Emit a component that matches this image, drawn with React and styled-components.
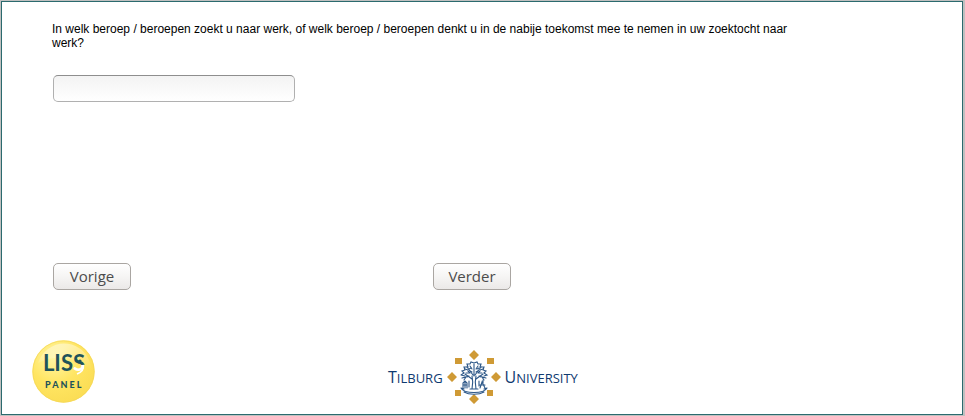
import React from "react";
import styled, { createGlobalStyle } from "styled-components";

const GlobalStyle = createGlobalStyle`
  * { box-sizing: border-box; }
  body {
    margin: 0;
    background: #c0c0c0;
    font-family: "Liberation Sans", Arial, sans-serif;
  }
`;

const Frame = styled.div`
  margin: 1px 2px 1px 1px;
  border: 1px solid #2b6a6e;
  background: #fff;
`;

const Form = styled.form`
  padding: 20px 50px 0;
`;

const Question = styled.label`
  display: block;
  max-width: 750px;
  font-size: 12px;
  line-height: 14px;
  color: #000;
`;

const AnswerInput = styled.input`
  display: block;
  width: 242px;
  height: 27px;
  margin: 25px 1px 0;
  padding: 4px 8px;
  border: 1px solid #b0b0b0;
  border-top-color: #8e8e8e;
  border-radius: 5px;
  background: linear-gradient(#f3f3f3, #fff);
  font: 15px "Open Sans", sans-serif;
  color: #3c3c3c;
`;

const Actions = styled.div`
  display: grid;
  grid-template-columns: 380px auto;
  justify-content: start;
  margin: 161px 1px 0;
`;

const NavButton = styled.button`
  width: 78px;
  height: 27px;
  padding: 0 0 2px;
  border: 1px solid #aaa6a2;
  border-radius: 5px;
  background: linear-gradient(#fff, #f6f5f4 50%, #ebe9e8);
  font: 15px/20px "Open Sans", "Noto Sans", sans-serif;
  color: #4c4c4c;
`;

const Footer = styled.footer`
  display: grid;
  grid-template-columns: 356px auto;
  justify-content: start;
  align-items: start;
  padding: 50px 30px 10px;
`;

const Logo = styled.svg`
  display: block;
`;

const UniversityMark = styled.div`
  display: flex;
  align-items: center;
  gap: 4px;
  padding-top: 10px;
`;

const Wordmark = styled.span`
  display: block;
  font: 13px/20px "Open Sans", "Noto Sans", sans-serif;
  color: #0f3a70;
  &::first-letter { font-size: 16px; }
`;

function LissLogo() {
  return (
    <Logo width="64" height="64" viewBox="0 0 64 64" role="img" aria-label="LISS Panel">
      <defs>
        <radialGradient id="sun" cx="0.36" cy="0.28" r="0.75">
          <stop offset="0" stopColor="#fff6a6" />
          <stop offset="0.55" stopColor="#ffe562" />
          <stop offset="1" stopColor="#fbdd55" />
        </radialGradient>
        <linearGradient id="shine" x1="0" y1="0" x2="0" y2="1">
          <stop offset="0" stopColor="#fff" stopOpacity="0.45" />
          <stop offset="1" stopColor="#fff" stopOpacity="0" />
        </linearGradient>
        <linearGradient id="split" gradientUnits="userSpaceOnUse" x1="0" y1="14" x2="0" y2="33">
          <stop offset="0.55" stopColor="#1f535b" />
          <stop offset="0.6" stopColor="#fff" />
        </linearGradient>
      </defs>
      <circle cx="31.5" cy="31.5" r="31.2" fill="url(#sun)" />
      <path d="M6 23C12 5 32-2 47 8c8 5 12 14 12 22C44 17 24 14 6 23z" fill="url(#shine)" />
      <circle cx="31.5" cy="31.5" r="30.6" fill="none" stroke="#f4d75a" strokeOpacity="0.7" />
      <g fill="#1f535b" fontFamily="Lato, sans-serif">
        <text x="32" y="31" fontSize="22" fontWeight="700" textAnchor="middle">
          LIS<tspan fill="url(#split)">S</tspan>
        </text>
        <text x="13" y="48" fontSize="9" fontWeight="900" letterSpacing="2">PANEL</text>
      </g>
      <circle cx="48" cy="21" r="1.6" fill="#1f535b" />
      <path d="M51 25c1 4-1 7-6 9" fill="none" stroke="#fff" strokeWidth="1.6" />
    </Logo>
  );
}

function Emblem() {
  return (
    <Logo width="54" height="54" viewBox="0 0 54 54" aria-hidden="true">
      <g fill="#cf9a35">
        <path d="M27 0l5 5-5 5-5-5zM27 44l5 5-5 5-5-5zM0 27l5-5 5 5-5 5zM44 27l5-5 5 5-5 5z" />
        <path d="M8 8h7v6H8zM40 8h7v6h-7zM8 40h6v6H8zM40 40h6v6h-6z" />
      </g>
      <g fill="none" stroke="#2c5788" strokeWidth="1.1" strokeLinecap="round">
        <path d="M25 39c1-5 1-9 0-13M29 39c-1-5-1-9 0-13M27 26V14M25 29l-7-5M29 29l7-5M26 25l-6-8M28 25l6-8M23 39h8" />
        <path d="M14 25l3-2-2-2 3-1-1-3 4 0-1-3 3 0 1-2 3 1 3-1 1 2 3 0-1 3 4 0-1 3 3 1-2 2 3 2-3 1M14 25l4 1M21 21l2 2M23 16l2 3M31 16l-2 3M33 21l-2 2" />
        <path d="M18 19l3 1M36 19l-3 1M22 19l2-1M30 19l2-1M25 22l-2-1M29 22l2-1M19 23l3 0M35 23l-3 0" />
        <path d="M15 28l4-1-2 3M39 28l-4-1 2 3M22 26l-2 1M32 26l2 1" />
        <path d="M16 39v-6l2-2 2 2v5M16 35h4M18 31v7M22 31v6M33 38l2-6 3 6M33 35h5M36 30v3M32 31v5" />
        <path d="M14 38c3 6 23 6 26 0M17 42c5 3 15 3 20 0M14 38l3 1M40 38l-3 1" />
      </g>
    </Logo>
  );
}

export default function App() {
  return (
    <>
      <GlobalStyle />
      <Frame>
        <Form onSubmit={(event) => event.preventDefault()}>
          <Question htmlFor="beroep">
            In welk beroep / beroepen zoekt u naar werk, of welk beroep / beroepen denkt u in de
            nabije toekomst mee te nemen in uw zoektocht naar werk?
          </Question>
          <AnswerInput id="beroep" name="beroep" type="text" />
          <Actions>
            <NavButton type="button">Vorige</NavButton>
            <NavButton type="submit">Verder</NavButton>
          </Actions>
        </Form>
        <Footer>
          <LissLogo />
          <UniversityMark>
            <Wordmark>TILBURG</Wordmark>
            <Emblem />
            <Wordmark>UNIVERSITY</Wordmark>
          </UniversityMark>
        </Footer>
      </Frame>
    </>
  );
}
